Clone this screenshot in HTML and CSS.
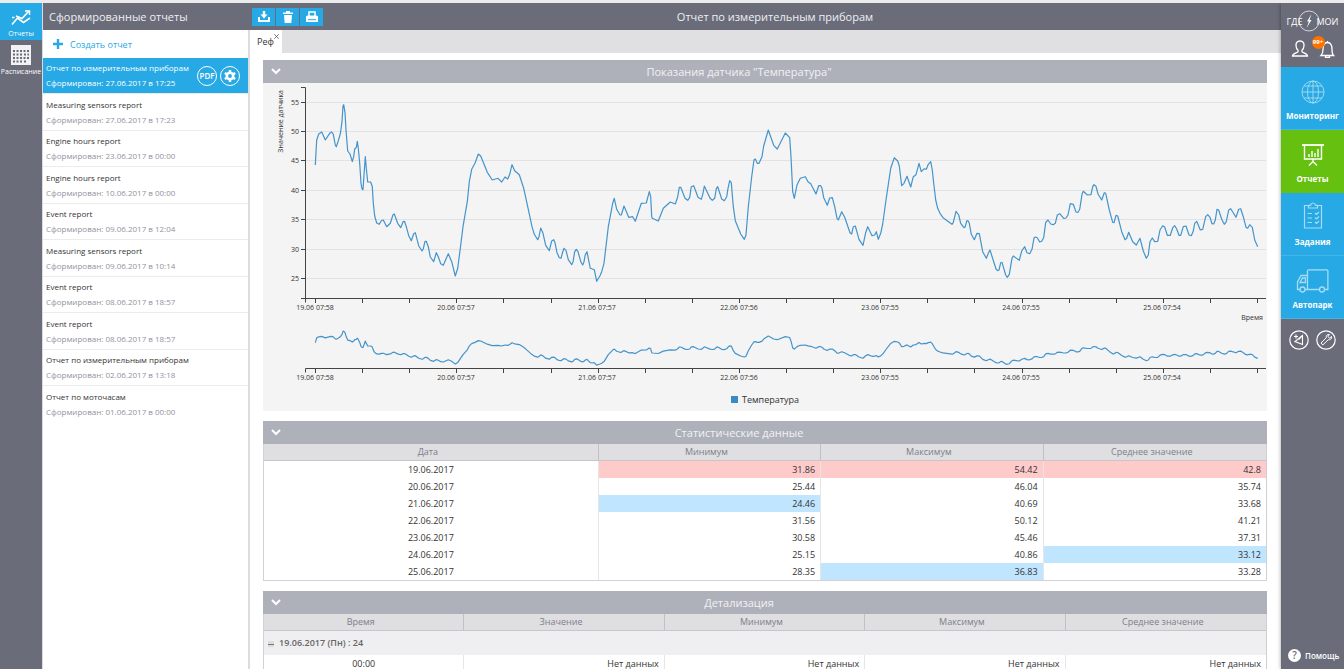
FILE: index.html
```html
<!DOCTYPE html>
<html lang="ru">
<head>
<meta charset="utf-8">
<title>Отчет по измерительным приборам</title>
<link rel="stylesheet" href="styles.css">
</head>
<body>
<div class="app">
  <nav class="rail">
    <a class="rail-item active" href="#reports">
      <svg width="20" height="18" viewBox="0 0 20 18" fill="none" stroke="#fff"><path stroke-width="1.600" d="M1 15.500L6.500 9l6 4.500L19 9"/><path stroke-width="1.600" d="M5 7l6 2.500L17.500 2.500"/><path stroke-width="1.500" d="M1 8.500h2.500M14 2h4.500v4"/></svg>
      <span>Отчеты</span>
    </a>
    <a class="rail-item" href="#schedule">
      <svg width="20" height="20" viewBox="0 0 20 20"><path fill="#f2f2f4" d="M0 0h20v20H0z"/><path d="M2 6h5.500M9 6h9M2 9.500h9M13 9.500h5M2 13h16M2 16.500h9M13 16.500h2" stroke="#6a6c7a" stroke-width="2" stroke-dasharray="2 1.500"/></svg>
      <span>Расписание</span>
    </a>
  </nav>

  <aside class="list-panel">
    <h2 class="bar list-title">Сформированные отчеты</h2>
    <button class="create" type="button">
      <svg width="10" height="10" viewBox="0 0 10 10"><path d="M5 0v10M0 5h10" stroke="#26a9e4" stroke-width="2.400"/></svg>
      Создать отчет
    </button>
    <ul class="reports">
      <li class="report selected">
        <a href="#r1"><b>Отчет по измерительным приборам</b><small>Сформирован: 27.06.2017 в 17:25</small></a>
        <button class="round" type="button">PDF</button>
        <button class="round" type="button" aria-label="Настройки">
          <svg width="12" height="12" viewBox="0 0 12 12"><circle cx="6" cy="6" r="3.200" fill="none" stroke="#fff" stroke-width="2.600"/><path d="M6 0v2M6 10v2M.8 3l1.700 1M9.500 8l1.700 1M.8 9l1.700-1M9.500 4l1.700-1" stroke="#fff" stroke-width="2.400"/></svg>
        </button>
      </li>
      <li class="report"><a href="#r2"><b>Measuring sensors report</b><small>Сформирован: 27.06.2017 в 17:23</small></a></li>
      <li class="report"><a href="#r3"><b>Engine hours report</b><small>Сформирован: 23.06.2017 в 00:00</small></a></li>
      <li class="report"><a href="#r4"><b>Engine hours report</b><small>Сформирован: 10.06.2017 в 00:00</small></a></li>
      <li class="report"><a href="#r5"><b>Event report</b><small>Сформирован: 09.06.2017 в 12:04</small></a></li>
      <li class="report"><a href="#r6"><b>Measuring sensors report</b><small>Сформирован: 09.06.2017 в 10:14</small></a></li>
      <li class="report"><a href="#r7"><b>Event report</b><small>Сформирован: 08.06.2017 в 18:57</small></a></li>
      <li class="report"><a href="#r8"><b>Event report</b><small>Сформирован: 08.06.2017 в 18:57</small></a></li>
      <li class="report"><a href="#r9"><b>Отчет по измерительным приборам</b><small>Сформирован: 02.06.2017 в 13:18</small></a></li>
      <li class="report"><a href="#r10"><b>Отчет по моточасам</b><small>Сформирован: 01.06.2017 в 00:00</small></a></li>
    </ul>
  </aside>

  <main class="main">
    <header class="bar main-bar">
      <div class="tools">
        <button type="button" aria-label="Скачать"><svg width="12" height="12" viewBox="0 0 12 12"><path d="M6 0v4" stroke="#fff" stroke-width="2.400"/><path d="M2.500 3.500h7L6 7.500z" fill="#fff"/><path d="M1 6v4h10V6" fill="none" stroke="#fff" stroke-width="2"/></svg></button>
        <button type="button" aria-label="Удалить"><svg width="12" height="12" viewBox="0 0 12 12"><path d="M1 1.500h3V0h4v1.500h3V3H1zM2 4h8l-.7 8H2.700z" fill="#fff"/></svg></button>
        <button type="button" aria-label="Печать"><svg width="12" height="12" viewBox="0 0 12 12"><path d="M3 5V1h6v4" fill="none" stroke="#fff" stroke-width="1.500"/><path d="M0 6q0-1.500 1.500-1.500h9Q12 4.500 12 6v5H0z" fill="#fff"/><path d="M2 8.700h8" stroke="#26a9e4"/></svg></button>
      </div>
      <h1>Отчет по измерительным приборам</h1>
    </header>
    <div class="tabs">
      <div class="tab"><a href="#tab">Реф</a><button type="button" aria-label="Закрыть"><svg width="5" height="5" viewBox="0 0 5 5"><path d="M.3.3l4.400 4.400M4.700.3L.3 4.700" stroke="#555" stroke-width=".8"/></svg></button></div>
    </div>
    <div class="content">
      <section class="panel">
        <h3 class="panel-head"><button type="button" aria-label="Свернуть"><svg width="10" height="7" viewBox="0 0 10 7"><path d="M1 1l4 4 4-4" fill="none" stroke="#fff" stroke-width="2"/></svg></button><span>Показания датчика "Температура"</span></h3>
        <div class="chart">
          <svg id="chart" viewBox="0 0 1004 304"></svg>
          <div class="legend"><i></i>Температура</div>
        </div>
      </section>

      <section class="panel">
        <h3 class="panel-head"><button type="button" aria-label="Свернуть"><svg width="10" height="7" viewBox="0 0 10 7"><path d="M1 1l4 4 4-4" fill="none" stroke="#fff" stroke-width="2"/></svg></button><span>Статистические данные</span></h3>
        <table class="grid stats">
          <thead><tr><th class="wide">Дата</th><th>Минимум</th><th>Максимум</th><th>Среднее значение</th></tr></thead>
          <tbody>
            <tr><td>19.06.2017</td><td class="high">31.86</td><td class="high">54.42</td><td class="high">42.8</td></tr>
            <tr><td>20.06.2017</td><td>25.44</td><td>46.04</td><td>35.74</td></tr>
            <tr><td>21.06.2017</td><td class="low">24.46</td><td>40.69</td><td>33.68</td></tr>
            <tr><td>22.06.2017</td><td>31.56</td><td>50.12</td><td>41.21</td></tr>
            <tr><td>23.06.2017</td><td>30.58</td><td>45.46</td><td>37.31</td></tr>
            <tr><td>24.06.2017</td><td>25.15</td><td>40.86</td><td class="low">33.12</td></tr>
            <tr><td>25.06.2017</td><td>28.35</td><td class="low">36.83</td><td>33.28</td></tr>
          </tbody>
        </table>
      </section>

      <section class="panel">
        <h3 class="panel-head"><button type="button" aria-label="Свернуть"><svg width="10" height="7" viewBox="0 0 10 7"><path d="M1 1l4 4 4-4" fill="none" stroke="#fff" stroke-width="2"/></svg></button><span>Детализация</span></h3>
        <table class="grid">
          <thead><tr><th>Время</th><th>Значение</th><th>Минимум</th><th>Максимум</th><th>Среднее значение</th></tr></thead>
          <tbody>
            <tr class="group"><td colspan="5"><button type="button" aria-label="Свернуть группу"></button>19.06.2017 (Пн) : 24</td></tr>
            <tr><td>00:00</td><td>Нет данных</td><td>Нет данных</td><td>Нет данных</td><td>Нет данных</td></tr>
          </tbody>
        </table>
      </section>
    </div>
  </main>

  <nav class="side">
    <div class="account">
      <a class="logo" href="#home">ГДЕ<svg width="22" height="22" viewBox="0 0 22 22" fill="none" stroke="#fff"><circle cx="11" cy="11" r="10" stroke-width=".7"/><path d="M13.500 4L9 11.500h2L8.500 18l5-8h-2z" fill="#fff" stroke="none"/></svg>МОИ</a>
      <div class="user">
        <button type="button" aria-label="Профиль"><svg width="18" height="18" viewBox="0 0 18 18" fill="none" stroke="#fff" stroke-width="1.300"><path d="M9 1C6 1 4.800 3 5 5.500 5.100 8 6 9.500 7 10.300v1.500C6 13 1.500 13 1.500 16h15c0-3-4.500-3-5.500-4.200v-1.500c1-.8 1.900-2.300 2-4.800C13.200 3 12 1 9 1z"/></svg></button>
        <button type="button" aria-label="Уведомления"><svg width="18" height="18" viewBox="0 0 18 18" fill="none" stroke="#fff" stroke-width="1.300"><path d="M4 15.500h12.500c-1.500-1.500-1.500-3-1.500-6C15 5.500 14 2.500 10.500 2.500S6 5.500 6 9.500c0 3-.5 4.500-2 6zM8.500 15.500v1.800h4v-1.800M10.500 1v1.500"/></svg><span class="badge">99+</span></button>
      </div>
    </div>
    <a class="side-item" href="#monitoring">
      <svg width="24" height="24" viewBox="0 0 24 24" fill="none" stroke="#fff" opacity=".55"><circle cx="12" cy="12" r="11"/><ellipse cx="12" cy="12" rx="5.500" ry="11"/><path d="M12 1v22M1 12h22M3 6h18M3 18h18"/></svg>
      <span>Мониторинг</span>
    </a>
    <a class="side-item active" href="#reports">
      <svg width="24" height="24" viewBox="0 0 24 24" fill="none" stroke="#fff" stroke-width="1.400"><path stroke-width="1.800" d="M1 2h22"/><path d="M3.500 2v14h17V2M12 16v3M8 22.500l4-4 4 4M8 14v-3M11 14V8M14 14v-4M17 14V6"/></svg>
      <span>Отчеты</span>
    </a>
    <a class="side-item" href="#tasks">
      <svg width="20" height="27" viewBox="0 0 20 27" fill="none" stroke="#fff" opacity=".6" stroke-width="1.200"><path d="M5.500 3.500H1.500v22.500h17V3.500h-4M5.500 6h9V3.300H12.500Q12 1 10 1T7.500 3.300h-2zM4.500 11.500H9M4.500 16H9M4.500 20.500H9M12 11l1.500 1.500L16 10M12 15.500l1.500 1.500L16 14.500M12 20l1.500 1.500L16 19"/></svg>
      <span>Задания</span>
    </a>
    <a class="side-item" href="#fleet">
      <svg width="33" height="24" viewBox="0 0 33 24" fill="none" stroke="#fff" opacity=".6" stroke-width="1.300"><path d="M4 20.500H1.500V13L5 6.500h6.500M11.500 20.500H9M11.500 20.500V2q0-1.200 1.200-1.200h18q1.200 0 1.200 1.200v18.500h-3.400M11.500 20.500h12M4 13.500l2.500-4.500h3v4.500z"/><circle cx="6.500" cy="20.500" r="2.500"/><circle cx="26" cy="20.500" r="2.500"/></svg>
      <span>Автопарк</span>
    </a>
    <div class="extras">
      <button type="button" aria-label="Интерфейс"><svg width="20" height="20" viewBox="0 0 20 20" fill="none" stroke="#fff"><circle cx="10" cy="10" r="9.200" stroke-width="1.200"/><path d="M7 4.500v4M5 6.500h4M13.500 5.500v9L6 11.500zM10 9.500l3.500-4" stroke-width="1.100"/></svg></button>
      <button type="button" aria-label="Настройки"><svg width="20" height="20" viewBox="0 0 20 20" fill="none" stroke="#fff"><circle cx="10" cy="10" r="9.200" stroke-width="1.200"/><path d="M13.500 4.500c-2-.5-3.800 1-3.200 3.200L5 13l1.800 2 5.500-5.300c2 .5 3.700-1 3.200-3.200l-2 1.600-1.600-1.500z"/></svg></button>
    </div>
    <a class="help" href="#help"><i>?</i>Помощь</a>
  </nav>
</div>
<script src="chart.js"></script>
</body>
</html>
```

FILE: styles.css
```css
* { box-sizing: border-box; }

body {
  margin: 0;
  font-family: "Open Sans", "Noto Sans", sans-serif;
  font-size: 9px;
  color: #333;
  background: #fff;
}

a { color: inherit; text-decoration: none; }

button {
  margin: 0;
  padding: 0;
  border: 0;
  background: none;
  color: inherit;
  font: inherit;
  cursor: pointer;
}

svg { display: block; }

h1, h2, h3 { margin: 0; font-weight: 400; }

.app {
  display: flex;
  height: 100vh;
  overflow: hidden;
  border-top: 3px solid #ececec;
}

.bar {
  flex: none;
  height: 27px;
  background: #6a6c7a;
  color: #f0f0f2;
  font-size: 11px;
  line-height: 28px;
}

/* Left rail */
.rail {
  flex: none;
  width: 42px;
  background: #6a6c7a;
  color: #fff;
}

.rail-item {
  display: flex;
  flex-direction: column;
  align-items: center;
  gap: 2px;
  height: 37px;
  padding-top: 5px;
  font-size: 7px;
  line-height: 10px;
}

.rail-item svg { flex: none; }
.rail-item.active { padding-top: 6px; background: #26a9e4; }

/* Report list */
.list-panel {
  flex: none;
  width: 208px;
  border-left: 1px solid #dcdce0;
  border-right: 2px solid #dcdcdc;
}

.list-title { margin-right: -2px; padding-left: 6px; }

.create {
  display: flex;
  align-items: center;
  gap: 7px;
  width: 100%;
  height: 28px;
  padding-left: 10px;
  color: #26a9e4;
  font-size: 9px;
}

.reports { margin: 0; padding: 0; list-style: none; }

.report {
  display: flex;
  align-items: center;
  gap: 3px;
  height: 36px;
  padding: 0 8px 0 3px;
  border-bottom: 1px solid #ececec;
}

.report:nth-child(even) { height: 37px; }
.report:last-child { border-bottom: 0; }

.report a {
  flex: 1;
  display: flex;
  flex-direction: column;
  gap: 3px;
  white-space: nowrap;
}

.report b { font-size: 8px; font-weight: 400; line-height: 12px; color: #333; }
.report small { font-size: 8px; line-height: 12px; color: #9293a0; }

.report.selected { background: #26a9e4; }
.report.selected b, .report.selected small { color: #fff; }

.round {
  display: flex;
  flex: none;
  align-items: center;
  justify-content: center;
  width: 20px;
  height: 20px;
  border: 1px solid #fff;
  border-radius: 50%;
  color: #fff;
  font-size: 8px;
  font-weight: 600;
}

/* Main area */
.main {
  flex: 1;
  display: flex;
  flex-direction: column;
  min-width: 0;
}

.main-bar { display: flex; align-items: center; padding-left: 2px; }
.main-bar h1 { flex: 1; padding-right: 54px; font-size: 11px; text-align: center; }

.tools { display: flex; gap: 1px; }

.tools button {
  display: flex;
  align-items: center;
  justify-content: center;
  width: 23px;
  height: 18px;
  background: #26a9e4;
}

.tabs {
  display: flex;
  flex: none;
  height: 23px;
  background: #e0e0e2;
}

.tab {
  display: flex;
  align-items: flex-start;
  width: 32px;
  padding: 4px 0 0 7px;
  background: #fff;
  font-size: 9px;
  line-height: 15px;
}

.content {
  display: flex;
  flex-direction: column;
  gap: 10px;
  min-height: 0;
  overflow: hidden;
  padding: 7px 14px 0 13px;
}

.panel { flex: none; }

.panel-head {
  display: flex;
  align-items: center;
  height: 23px;
  padding: 0 8px;
  background: #aeb0ba;
  color: #f2f2f5;
  font-size: 11px;
}

.panel-head span { flex: 1; padding-right: 62px; text-align: center; }

.chart {
  padding: 0 0 1px;
  background: #f4f4f4;
}

.chart svg { width: 100%; height: auto; }

.chart text { font-size: 7px; fill: #333; }
.chart .gridline { stroke: #e2e2e2; }
.chart .axis { fill: none; stroke: #444; }
.chart .series { fill: none; stroke: #4494cb; stroke-width: 1.2; stroke-linejoin: round; }

.legend {
  display: flex;
  align-items: center;
  justify-content: center;
  gap: 4px;
  height: 23px;
  padding-top: 2px;
  font-size: 9px;
}

.legend i { width: 7px; height: 7px; background: #3a8bc4; }

/* Tables */
.grid {
  width: 100%;
  table-layout: fixed;
  border-collapse: separate;
  border-spacing: 0;
  border: 1px solid #d2d2d4;
  border-top: 0;
  border-right-color: #cfcfd2;
}

.grid .wide { width: 33.4%; }

.grid th {
  height: 17px;
  padding: 0 6px 0 0;
  border-right: 1px solid #c0c1c8;
  border-bottom: 1px solid #c6c6cb;
  background: #dfdfe1;
  color: #7c7e8a;
  font-size: 9px;
  font-weight: 400;
  line-height: 12px;
}

.grid td {
  height: 17px;
  padding: 0 5px;
  border-right: 1px solid #e6e6e6;
  font-size: 9px;
  line-height: 12px;
  text-align: right;
}

.grid th:last-child, .grid td:last-child { border-right: 0; }
.grid td:first-child { text-align: center; }
.grid .high { background: #ffcaca; }
.grid .low { background: #c0e5ff; }

.grid .group td {
  height: 24px;
  padding: 0 4px;
  background: #efeff1;
  color: #666;
  font-weight: 600;
  text-align: left;
}

.group button {
  width: 6px;
  height: 6px;
  margin-right: 5px;
  border: 0 solid #dcdcdf;
  border-width: 3px 0 2px;
  background: #777;
  vertical-align: 1px;
}

/* Right navigation */
.side {
  z-index: 1;
  display: flex;
  flex: none;
  flex-direction: column;
  width: 63px;
  background: #6a6c7a;
  color: #fff;
  box-shadow: 0 0 4px rgba(0, 0, 0, .4);
}

.account { height: 64px; padding-top: 7px; }

.logo {
  display: flex;
  align-items: center;
  justify-content: center;
  height: 22px;
  font-size: 9px;
}

.logo svg { margin: 0 -4px; }

.user { display: flex; justify-content: center; gap: 8px; padding-top: 8px; }
.user button { position: relative; }

.badge {
  position: absolute;
  top: -4px;
  left: -5px;
  width: 13px;
  height: 13px;
  border-radius: 50%;
  background: #ff7200;
  font-size: 6px;
  font-weight: 700;
  line-height: 13px;
  text-align: center;
}

.side-item {
  display: flex;
  flex-direction: column;
  align-items: center;
  justify-content: space-between;
  height: 63px;
  padding: 13px 0 7px;
  border-bottom: 1px solid #45b5e8;
  background: #26a9e4;
  font-size: 8px;
  font-weight: 700;
  line-height: 12px;
}

.side-item[href="#tasks"] { padding-top: 9px; }
.side-item.active { border-color: #66c010; background: #66c010; }

.extras { display: flex; justify-content: center; gap: 7px; padding-top: 11px; }

.help {
  display: flex;
  align-items: center;
  gap: 4px;
  margin-top: auto;
  padding: 0 0 7px 7px;
  font-size: 8px;
  font-weight: 600;
}

.help i {
  width: 13px;
  height: 13px;
  border-radius: 50%;
  background: #fff;
  color: #6a6c7a;
  font-size: 10px;
  font-style: normal;
  line-height: 13px;
  text-align: center;
}
```

FILE: chart.js
```js
// Samples as "x,y" pairs in thirds of a unit; each block starts at its own x offset.
const blocks = [
  [0, "160,255 164,180 170,162 179,156 190,180 203,160 209,156 214,163 220,195 223,200 228,185 235,162 240,125 243,78 245,74 249,98 252,150 257,213 264,222 271,245 275,230 278,207 283,202 286,184 289,205 293,250 297,310 300,327 303,329 306,285 310,230 313,265 317,306 326,306 331,320 334,370 338,408 344,429 352,433 358,422 364,420 374,440 385,430 393,404 397,402 407,430 416,443 424,424 428,425 433,440 440,467 448,482 455,461 460,458 470,497 480,513 484,506 489,484 493,484 499,500 505,531 515,545 523,518 529,530 536,551 544,556 559,521 569,545 580,588 587,565 595,505 603,440 616,365 622,305 629,268 639,250 649,222 656,228 676,277 691,300 708,295 719,306 729,291 737,297 743,283 750,254 758,272 772,284 785,325 795,370 810,440 817,463 827,479 831,470 836,444 843,460 851,496 862,512 869,483 875,479 879,488 885,518 892,533 897,535 902,516 906,505 912,511 919,539 929,554 933,546 938,515 943,508 948,515 957,547 962,555 966,545 970,524 975,515 979,535 985,565 997,569 1004,604"],
  [1014, "0,587 5,575 12,550 25,440 38,370 43,355 50,388 60,405 64,405 72,378 86,412 98,410 106,424 124,370 139,369 148,335 152,350 155,410 157,415 175,423 190,385 211,366 226,372 233,350 238,322 242,322 255,355 263,361 269,352 274,320 281,317 294,352 304,358 309,340 313,318 330,354 337,361 344,355 349,326 353,320 365,357 373,362 380,350 384,325 389,302 394,308 400,380 406,422 422,462 433,478 438,465 445,380 455,290 462,240 466,237 472,250 477,250 486,230 491,198 505,150 521,196 532,207 556,159 569,173 573,230 578,335 583,355 591,315 601,295 616,290 624,305 632,311 648,342 656,317 662,317 666,325 671,353 682,376 689,354 697,353 704,380 711,415 715,420 725,395 734,412 750,458 755,462 760,440 766,438 777,478 789,496 797,458 803,440 816,467 824,465 829,455 835,478 842,460 848,432 858,360 872,265 883,233 893,243 898,258 905,317 912,310 921,289 932,321 940,290 948,284 957,250 964,275 973,266 979,268 985,253 992,245 997,270 1001,310 1007,360 1013,385 1020,400"],
  [2004, "39,413 66,433 70,427 78,394 86,405 92,430 102,443 106,440 110,423 114,422 118,430 124,463 133,479 141,460 148,461 158,515 169,535 175,520 180,510 198,567 203,572 207,570 212,548 216,547 227,585 232,592 238,583 246,535 250,528 268,541 275,513 284,500 291,518 299,521 306,508 312,474 316,471 322,473 329,486 335,484 341,473 347,427 354,420 362,432 370,434 376,430 382,405 389,401 401,415 408,414 414,405 421,371 430,373 438,396 444,397 449,388 456,343 460,334 472,345 483,344 488,320 492,314 498,319 504,342 515,360 523,338 527,340 538,390 548,427 552,428 558,406 563,408 575,455 585,479 590,475 596,457 608,485 619,495 630,475 640,513 649,535 655,525 660,485 667,474 674,485 683,484 690,450 698,437 704,441 712,466 721,466 728,443 734,437 740,447 747,466 752,466 760,440 768,438 777,465 784,467 790,453 794,430 800,424 811,450 818,448 827,410 833,404 840,412 846,431 851,432 856,420 861,388 866,390 875,418 883,433 889,425 896,390 902,386 918,412 926,388 932,386 940,410 948,442 953,445 959,434 967,442 974,480 983,500"]
];

const points = blocks.flatMap(([dx, list]) => list.split(" ").map(pair => {
  const [x, y] = pair.split(",").map(Number);
  return [(x + dx) / 3 - 1, y / 3 - 3];
}));

const line = (scale, shift) => points
  .map(([x, y]) => x.toFixed(1) + "," + (y * scale + shift).toFixed(1)).join(" ");

const days = ["19.06 07:58", "20.06 07:57", "21.06 07:57", "22.06 07:56", "23.06 07:55", "24.06 07:55", "25.06 07:54"];
let out = "";

for (let i = 0; i < 7; i++) {
  const y = Math.round(18.5 + i * 29.43) + 0.5;
  out += `<path class="gridline" d="M43 ${y}H1003"/><path class="axis" d="M38 ${y}h4"/>`;
  out += `<text x="36" y="${y + 2.5}" text-anchor="end">${55 - i * 5}</text>`;
}
out += '<path class="axis" d="M38 4.500h4.500V219.500M38 215.500H1003"/>';
out += '<path class="axis" d="M42.500 289.500v-4H1003"/>';

for (const y of [215, 285]) {
  for (let i = 0; i <= 20; i++) {
    out += `<path class="axis" d="M${Math.round(52 + i * 47.1) + 0.5} ${y}v5"/>`;
  }
  days.forEach((label, i) => {
    out += `<text x="${Math.round(52 + i * 141.2)}" y="${y + 12}" text-anchor="middle">${label}</text>`;
  });
}

out += '<text x="1000" y="237" text-anchor="end">Время</text>';
out += '<text transform="translate(20 7) rotate(-90)" text-anchor="end">Значение датчика</text>';
out += `<polyline class="series" points="${line(1, 0)}"/>`;
out += `<polyline class="series" points="${line(0.192, 244)}"/>`;
document.getElementById("chart").innerHTML = out;
```
